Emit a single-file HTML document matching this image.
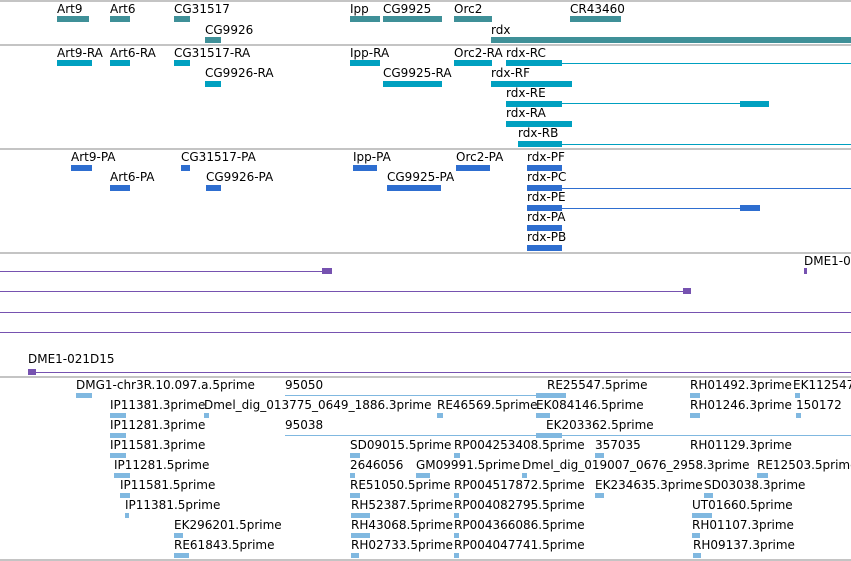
<!DOCTYPE html>
<html><head><meta charset="utf-8"><style>
html,body{margin:0;padding:0;background:#fff;width:851px;height:561px;overflow:hidden;position:relative;font-family:"DejaVu Sans","Liberation Sans",sans-serif;}
.t{position:absolute;font-size:12px;line-height:13px;color:#000;white-space:nowrap;margin-top:0px;}
.b{position:absolute;height:6px;}
.l{position:absolute;height:1px;}
.s{position:absolute;left:0;width:851px;height:2px;background:#c4c4c4;}
.g .b,.g .l{background:#3f9098}
.r .b,.r .l{background:#00a0c0}
.p .b,.p .l{background:#2e6ed0}
.u .b,.u .l{background:#7652b0}
.e .b,.e .l{background:#80b8e0}
.e .b{height:5px}
</style></head><body>
<div class="s" style="top:0"></div>
<div class="s" style="top:44px"></div>
<div class="s" style="top:148px"></div>
<div class="s" style="top:252px"></div>
<div class="s" style="top:376px"></div>
<div class="s" style="top:559px"></div>

<div class="g">
<div class="t" style="left:57px;top:3px">Art9</div><div class="b" style="left:57px;top:16px;width:32px"></div>
<div class="t" style="left:110px;top:3px">Art6</div><div class="b" style="left:110px;top:16px;width:20px"></div>
<div class="t" style="left:174px;top:3px">CG31517</div><div class="b" style="left:174px;top:16px;width:16px"></div>
<div class="t" style="left:205px;top:24px">CG9926</div><div class="b" style="left:205px;top:37px;width:16px"></div>
<div class="t" style="left:350px;top:3px">Ipp</div><div class="b" style="left:350px;top:16px;width:30px"></div>
<div class="t" style="left:383px;top:3px">CG9925</div><div class="b" style="left:383px;top:16px;width:59px"></div>
<div class="t" style="left:454px;top:3px">Orc2</div><div class="b" style="left:454px;top:16px;width:38px"></div>
<div class="t" style="left:570px;top:3px">CR43460</div><div class="b" style="left:570px;top:16px;width:51px"></div>
<div class="t" style="left:491px;top:24px">rdx</div><div class="b" style="left:491px;top:37px;width:360px"></div>
</div>

<div class="r">
<div class="t" style="left:57px;top:47px">Art9-RA</div><div class="b" style="left:57px;top:60px;width:35px"></div>
<div class="t" style="left:110px;top:47px">Art6-RA</div><div class="b" style="left:110px;top:60px;width:20px"></div>
<div class="t" style="left:174px;top:47px">CG31517-RA</div><div class="b" style="left:174px;top:60px;width:16px"></div>
<div class="t" style="left:350px;top:47px">Ipp-RA</div><div class="b" style="left:350px;top:60px;width:30px"></div>
<div class="t" style="left:454px;top:47px">Orc2-RA</div><div class="b" style="left:454px;top:60px;width:38px"></div>
<div class="t" style="left:506px;top:47px">rdx-RC</div><div class="b" style="left:506px;top:60px;width:56px"></div><div class="l" style="left:562px;top:63px;width:289px"></div>
<div class="t" style="left:205px;top:67px">CG9926-RA</div><div class="b" style="left:205px;top:81px;width:16px"></div>
<div class="t" style="left:383px;top:67px">CG9925-RA</div><div class="b" style="left:383px;top:81px;width:59px"></div>
<div class="t" style="left:491px;top:67px">rdx-RF</div><div class="b" style="left:491px;top:81px;width:81px"></div>
<div class="t" style="left:506px;top:87px">rdx-RE</div><div class="b" style="left:506px;top:101px;width:56px"></div><div class="l" style="left:562px;top:103px;width:180px"></div><div class="b" style="left:740px;top:101px;width:29px"></div>
<div class="t" style="left:506px;top:107px">rdx-RA</div><div class="b" style="left:506px;top:121px;width:66px"></div>
<div class="t" style="left:518px;top:127px">rdx-RB</div><div class="b" style="left:518px;top:141px;width:44px"></div><div class="l" style="left:562px;top:144px;width:289px"></div>
</div>

<div class="p">
<div class="t" style="left:71px;top:151px">Art9-PA</div><div class="b" style="left:71px;top:165px;width:21px"></div>
<div class="t" style="left:181px;top:151px">CG31517-PA</div><div class="b" style="left:181px;top:165px;width:9px"></div>
<div class="t" style="left:353px;top:151px">Ipp-PA</div><div class="b" style="left:353px;top:165px;width:24px"></div>
<div class="t" style="left:456px;top:151px">Orc2-PA</div><div class="b" style="left:456px;top:165px;width:34px"></div>
<div class="t" style="left:527px;top:151px">rdx-PF</div><div class="b" style="left:527px;top:165px;width:35px"></div>
<div class="t" style="left:110px;top:171px">Art6-PA</div><div class="b" style="left:110px;top:185px;width:20px"></div>
<div class="t" style="left:206px;top:171px">CG9926-PA</div><div class="b" style="left:206px;top:185px;width:15px"></div>
<div class="t" style="left:387px;top:171px">CG9925-PA</div><div class="b" style="left:387px;top:185px;width:54px"></div>
<div class="t" style="left:527px;top:171px">rdx-PC</div><div class="b" style="left:527px;top:185px;width:35px"></div><div class="l" style="left:562px;top:188px;width:289px"></div>
<div class="t" style="left:527px;top:191px">rdx-PE</div><div class="b" style="left:527px;top:205px;width:35px"></div><div class="l" style="left:562px;top:208px;width:180px"></div><div class="b" style="left:740px;top:205px;width:20px"></div>
<div class="t" style="left:527px;top:211px">rdx-PA</div><div class="b" style="left:527px;top:225px;width:35px"></div>
<div class="t" style="left:527px;top:231px">rdx-PB</div><div class="b" style="left:527px;top:245px;width:35px"></div>
</div>

<div class="u">
<div class="l" style="left:0;top:271px;width:326px"></div><div class="b" style="left:322px;top:268px;width:10px"></div>
<div class="t" style="left:804px;top:255px">DME1-0</div><div class="b" style="left:804px;top:268px;width:3px"></div>
<div class="l" style="left:0;top:291px;width:686px"></div><div class="b" style="left:683px;top:288px;width:8px"></div>
<div class="l" style="left:0;top:312px;width:851px"></div>
<div class="l" style="left:0;top:332px;width:851px"></div>
<div class="t" style="left:28px;top:353px">DME1-021D15</div><div class="b" style="left:28px;top:369px;width:8px"></div><div class="l" style="left:28px;top:372px;width:823px"></div>
</div>

<div class="e">
<div class="t" style="left:76px;top:379px">DMG1-chr3R.10.097.a.5prime</div><div class="b" style="left:76px;top:393px;width:16px"></div>
<div class="t" style="left:285px;top:379px">95050</div><div class="l" style="left:285px;top:395px;width:255px"></div>
<div class="t" style="left:547px;top:379px">RE25547.5prime</div><div class="b" style="left:536px;top:393px;width:30px"></div>
<div class="t" style="left:690px;top:379px">RH01492.3prime</div><div class="b" style="left:690px;top:393px;width:10px"></div>
<div class="t" style="left:793px;top:379px">EK112547</div><div class="b" style="left:795px;top:393px;width:5px"></div>

<div class="t" style="left:110px;top:399px">IP11381.3prime</div><div class="b" style="left:110px;top:413px;width:16px"></div>
<div class="t" style="left:204px;top:399px">Dmel_dig_013775_0649_1886.3prime</div><div class="b" style="left:204px;top:413px;width:5px"></div>
<div class="t" style="left:437px;top:399px">RE46569.5prime</div><div class="b" style="left:437px;top:413px;width:6px"></div>
<div class="t" style="left:536px;top:399px">EK084146.5prime</div><div class="b" style="left:536px;top:413px;width:14px"></div>
<div class="t" style="left:690px;top:399px">RH01246.3prime</div><div class="b" style="left:690px;top:413px;width:10px"></div>
<div class="t" style="left:796px;top:399px">150172</div><div class="b" style="left:796px;top:413px;width:5px"></div>

<div class="t" style="left:110px;top:419px">IP11281.3prime</div><div class="b" style="left:110px;top:433px;width:16px"></div>
<div class="t" style="left:285px;top:419px">95038</div><div class="l" style="left:285px;top:435px;width:566px"></div>
<div class="t" style="left:546px;top:419px">EK203362.5prime</div><div class="b" style="left:536px;top:433px;width:26px"></div>

<div class="t" style="left:110px;top:439px">IP11581.3prime</div><div class="b" style="left:110px;top:453px;width:16px"></div>
<div class="t" style="left:350px;top:439px">SD09015.5prime</div><div class="b" style="left:350px;top:453px;width:10px"></div>
<div class="t" style="left:454px;top:439px">RP004253408.5prime</div><div class="b" style="left:454px;top:453px;width:6px"></div>
<div class="t" style="left:595px;top:439px">357035</div><div class="b" style="left:595px;top:453px;width:9px"></div>
<div class="t" style="left:690px;top:439px">RH01129.3prime</div>

<div class="t" style="left:114px;top:459px">IP11281.5prime</div><div class="b" style="left:114px;top:473px;width:16px"></div>
<div class="t" style="left:350px;top:459px">2646056</div><div class="b" style="left:350px;top:473px;width:5px"></div>
<div class="t" style="left:416px;top:459px">GM09991.5prime</div><div class="b" style="left:416px;top:473px;width:14px"></div>
<div class="t" style="left:522px;top:459px">Dmel_dig_019007_0676_2958.3prime</div><div class="b" style="left:522px;top:473px;width:5px"></div>
<div class="t" style="left:757px;top:459px">RE12503.5prime</div><div class="b" style="left:757px;top:473px;width:11px"></div>

<div class="t" style="left:120px;top:479px">IP11581.5prime</div><div class="b" style="left:120px;top:493px;width:10px"></div>
<div class="t" style="left:350px;top:479px">RE51050.5prime</div><div class="b" style="left:350px;top:493px;width:10px"></div>
<div class="t" style="left:454px;top:479px">RP004517872.5prime</div><div class="b" style="left:454px;top:493px;width:5px"></div>
<div class="t" style="left:595px;top:479px">EK234635.3prime</div><div class="b" style="left:595px;top:493px;width:9px"></div>
<div class="t" style="left:704px;top:479px">SD03038.3prime</div><div class="b" style="left:704px;top:493px;width:9px"></div>

<div class="t" style="left:125px;top:499px">IP11381.5prime</div><div class="b" style="left:125px;top:513px;width:4px"></div>
<div class="t" style="left:351px;top:499px">RH52387.5prime</div><div class="b" style="left:351px;top:513px;width:19px"></div>
<div class="t" style="left:454px;top:499px">RP004082795.5prime</div><div class="b" style="left:454px;top:513px;width:5px"></div>
<div class="t" style="left:692px;top:499px">UT01660.5prime</div><div class="b" style="left:692px;top:513px;width:20px"></div>

<div class="t" style="left:174px;top:519px">EK296201.5prime</div><div class="b" style="left:174px;top:533px;width:9px"></div>
<div class="t" style="left:351px;top:519px">RH43068.5prime</div><div class="b" style="left:351px;top:533px;width:19px"></div>
<div class="t" style="left:454px;top:519px">RP004366086.5prime</div><div class="b" style="left:454px;top:533px;width:5px"></div>
<div class="t" style="left:692px;top:519px">RH01107.3prime</div><div class="b" style="left:692px;top:533px;width:8px"></div>

<div class="t" style="left:174px;top:539px">RE61843.5prime</div><div class="b" style="left:174px;top:553px;width:15px"></div>
<div class="t" style="left:351px;top:539px">RH02733.5prime</div><div class="b" style="left:351px;top:553px;width:8px"></div>
<div class="t" style="left:454px;top:539px">RP004047741.5prime</div><div class="b" style="left:454px;top:553px;width:5px"></div>
<div class="t" style="left:693px;top:539px">RH09137.3prime</div><div class="b" style="left:693px;top:553px;width:8px"></div>
</div>
</body></html>
